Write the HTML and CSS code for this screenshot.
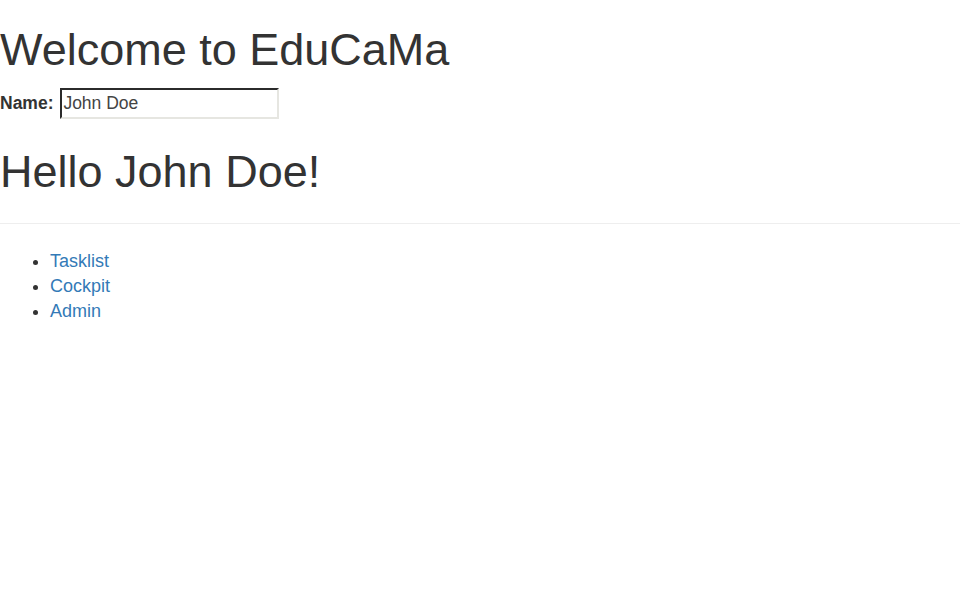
FILE: index.html
```html
<!DOCTYPE html>
<html>
<head>
<meta charset="utf-8">
<title>EduCaMa</title>
<link rel="stylesheet" href="styles.css">
</head>
<body>
<h1 class="title">Welcome to EduCaMa</h1>
<div class="name-row">
  <label class="name-label" for="name">Name:</label>
  <input class="name-input" id="name" type="text" value="John Doe">
</div>
<h1 class="title">Hello John Doe!</h1>
<hr class="divider">
<ul class="links">
  <li><a href="#">Tasklist</a></li>
  <li><a href="#">Cockpit</a></li>
  <li><a href="#">Admin</a></li>
</ul>
</body>
</html>
```
FILE: styles.css
```css
html, body {
  margin: 0;
  padding: 0;
  background: #fff;
}
body {
  font-family: "Liberation Sans", Arial, sans-serif;
  font-size: 17.5px;
  line-height: 25px;
  color: #333;
}
.title {
  font-size: 45px;
  font-weight: 500;
  line-height: 49.5px;
  margin: 25px 0 12.5px;
}
.name-row {
  line-height: 25px;
  padding-top: 1px;
}
.name-label {
  display: inline-block;
  font-weight: bold;
  margin-bottom: 6px;
}
.name-input {
  font-family: "Liberation Sans", Arial, sans-serif;
  font-size: 17.5px;
  color: #444;
  padding: 0 1px;
  margin: 0 0 0 2px;
  box-sizing: border-box;
  width: 219px;
  height: 31px;
  border-style: solid;
  border-width: 2px;
  border-color: #2b2b2b #e6e6e1 #e6e6e1 #2b2b2b;
  background: #fff;
  vertical-align: baseline;
}
.divider {
  border: 0;
  border-top: 1px solid #eee;
  margin: 26px 0 25px;
  height: 0;
}
.links {
  margin: 0;
  padding-left: 50px;
  font-size: 18px;
}
.links li {
  line-height: 25px;
}
.links a {
  color: #337ab7;
  text-decoration: none;
}
```
